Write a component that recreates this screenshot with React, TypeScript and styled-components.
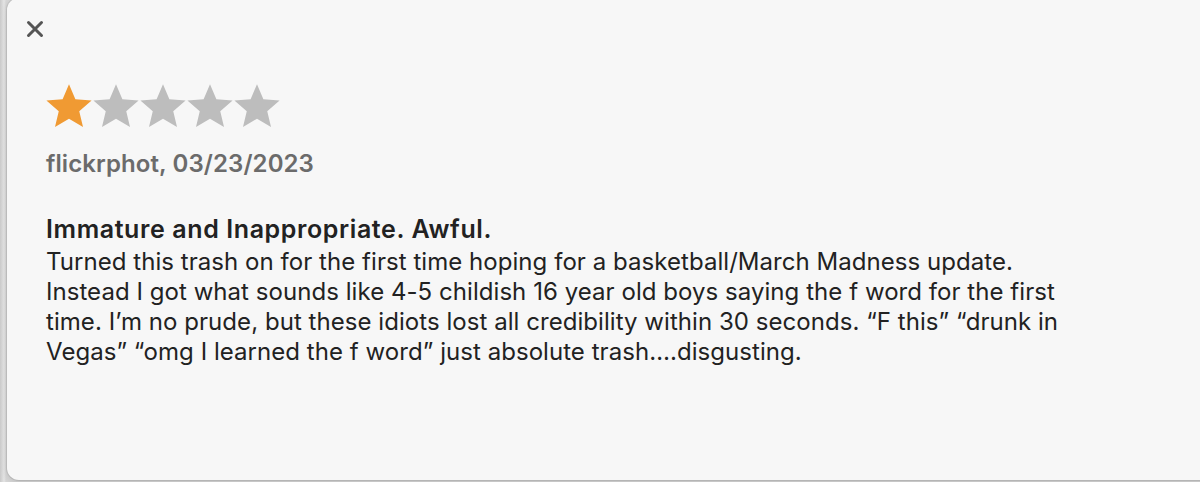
import React from 'react';
import styled, { createGlobalStyle } from 'styled-components';

//Styles
const GlobalStyle = createGlobalStyle`
  html, body {
    margin: 0;
    padding: 0;
    background: #d9d9d9;
    overflow: hidden;
  }
  body {
    font-family: Inter, 'Noto Sans', 'Liberation Sans', sans-serif;
  }
`;
const Backdrop = styled.div`
  width: 1200px;
  height: 482px;
  display: flex;
  background: linear-gradient(90deg, #c9c9c9 0, #e4e4e4 4px, #d6d6d6 6px);
  overflow: hidden;
`;
const Panel = styled.div`
  margin: -2px -20px 0 7px;
  flex: 1;
  height: 482px;
  background: #f7f7f7;
  border-radius: 12px;
  box-shadow: 0 0 0 1px rgba(0, 0, 0, 0.08), 0 2px 6px rgba(0, 0, 0, 0.12);
  padding: 22px 0 0 19px;
  box-sizing: border-box;
  display: flex;
  flex-direction: column;
`;
const CloseButton = styled.button`
  width: 18px;
  height: 18px;
  padding: 0;
  border: none;
  background: transparent;
  display: flex;
  align-items: center;
  justify-content: center;
  cursor: pointer;
`;
const Content = styled.div`
  padding: 46px 0 0 20px;
  display: flex;
  flex-direction: column;
`;
const Stars = styled.div`
  display: flex;
  gap: 1px;
  height: 46px;
`;
const Author = styled.div`
  margin-top: 19px;
  font-size: 24px;
  font-weight: 600;
  letter-spacing: 0.1px;
  color: #6b6b6b;
  line-height: 30px;
`;
const Title = styled.div`
  margin-top: 35px;
  margin-bottom: 3px;
  font-size: 25px;
  font-weight: 600;
  letter-spacing: 0.6px;
  color: #222;
  line-height: 30px;
`;
const Body = styled.p`
  margin: 0;
  width: 1035px;
  font-size: 24px;
  font-weight: 400;
  letter-spacing: 0.05px;
  color: #222;
  line-height: 30px;
`;

//Types
interface IStar {
  filled: boolean;
}

const StarIcon = ({ filled }: IStar) => (
  <svg width="46" height="46" viewBox="1 0.5 22 22">
    <path
      d="M12 0.6l3.05 7.2 7.75 0.62-5.9 5.08 1.8 7.6L12 17.1l-6.7 4 1.8-7.6-5.9-5.08 7.75-0.62z"
      fill={filled ? '#f09a33' : '#bdbdbd'}
    />
  </svg>
);

//JSX
const App = () => {
  const rating = 1;
  return (
    <>
      <GlobalStyle />
      <Backdrop>
        <Panel>
          <CloseButton aria-label="Close">
            <svg width="18" height="18" viewBox="0 0 18 18">
              <path d="M2.5 2.5l13 13M15.5 2.5l-13 13" stroke="#555" strokeWidth="3" strokeLinecap="round" />
            </svg>
          </CloseButton>
          <Content>
            <Stars>
              {[1, 2, 3, 4, 5].map((n) => (
                <StarIcon key={n} filled={n <= rating} />
              ))}
            </Stars>
            <Author>flickrphot, 03/23/2023</Author>
            <Title>Immature and Inappropriate. Awful.</Title>
            <Body>
              Turned this trash on for the first time hoping for a basketball/March Madness update. Instead I got what
              sounds like 4-5 childish 16 year old boys saying the f word for the first time. I’m no prude, but these
              idiots lost all credibility within 30 seconds. “F this” “drunk in Vegas” “omg I learned the f word” just
              absolute trash….disgusting.
            </Body>
          </Content>
        </Panel>
      </Backdrop>
    </>
  );
};

export default App;
